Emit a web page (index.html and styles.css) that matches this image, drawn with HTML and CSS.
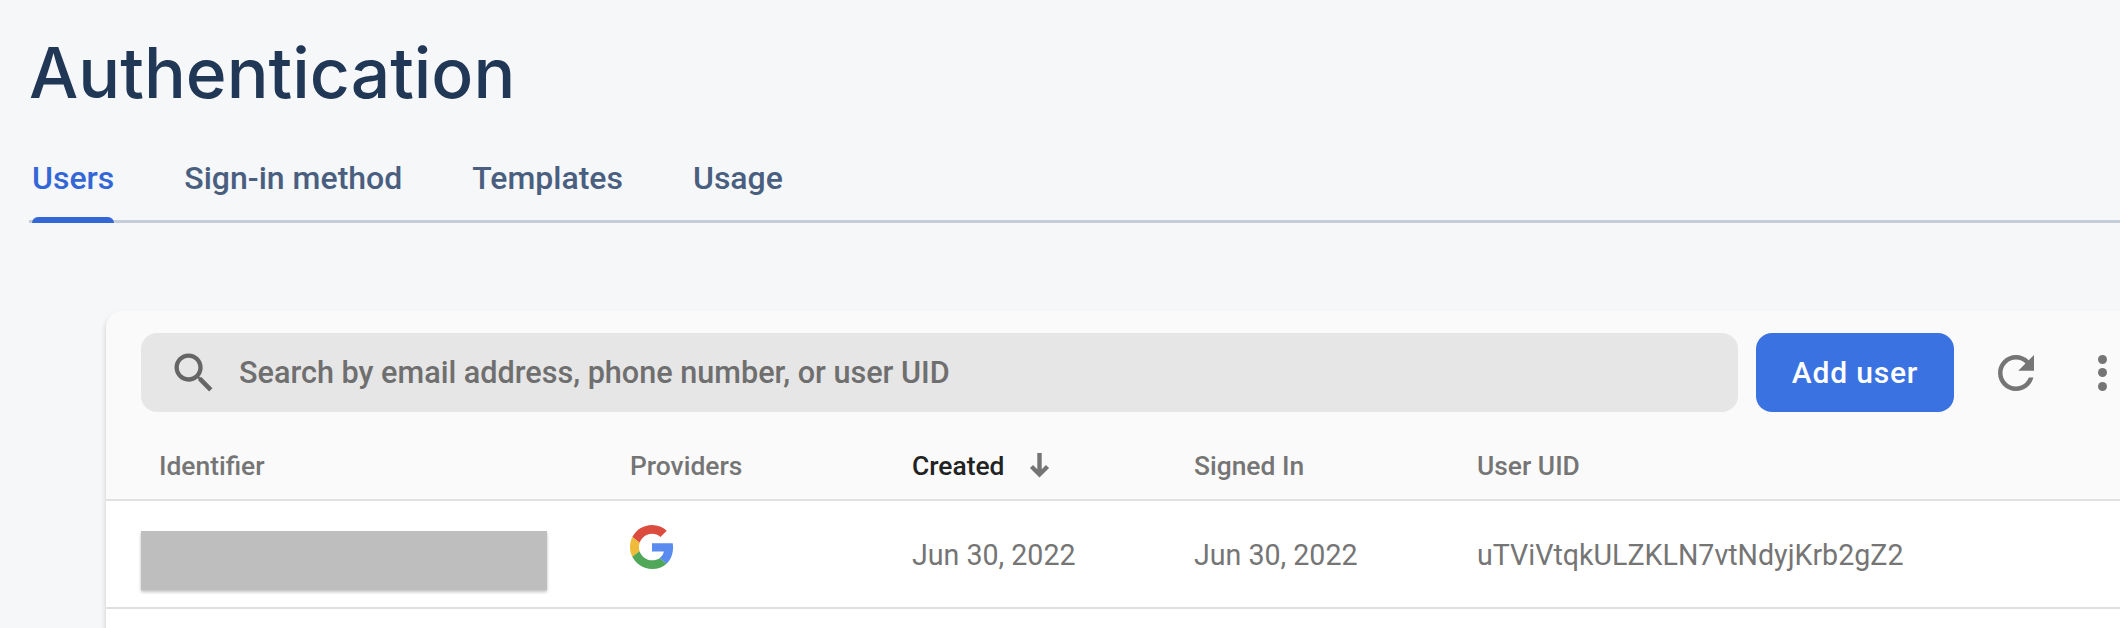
FILE: index.html
```html
<!DOCTYPE html>
<html lang="en">
<head>
    <meta charset="UTF-8">
    <meta name="viewport" content="width=device-width, initial-scale=1.0">
    <title>Authentication</title>
    <link rel="stylesheet" href="styles.css">
</head>
<body>

    <!-- Page header -->
    <header class="page-header">
        <h1>Authentication</h1>
        <nav class="tabs">
            <a href="#" class="tab active">Users</a>
            <a href="#" class="tab">Sign-in method</a>
            <a href="#" class="tab">Templates</a>
            <a href="#" class="tab">Usage</a>
        </nav>
    </header>

    <!-- Users card -->
    <section class="card">
        <div class="toolbar">
            <div class="search">
                <svg class="search-icon" viewBox="0 0 24 24"><path d="M15.5 14h-.79l-.28-.27C15.41 12.59 16 11.11 16 9.5 16 5.91 13.09 3 9.5 3S3 5.91 3 9.5 5.91 16 9.5 16c1.61 0 3.09-.59 4.23-1.57l.27.28v.79l5 4.99L20.49 19l-4.99-5zm-6 0C7.01 14 5 11.99 5 9.5S7.01 5 9.5 5 14 7.01 14 9.5 11.99 14 9.5 14z"/></svg>
                <span>Search by email address, phone number, or user UID</span>
            </div>
            <button class="add-user">Add user</button>
            <svg class="refresh-icon" viewBox="0 0 24 24"><path d="M17.65 6.35C16.2 4.9 14.21 4 12 4c-4.42 0-7.99 3.58-7.99 8s3.57 8 7.99 8c3.73 0 6.84-2.55 7.73-6h-2.08c-.82 2.33-3.04 4-5.65 4-3.31 0-6-2.69-6-6s2.69-6 6-6c1.66 0 3.14.69 4.22 1.78L13 11h7V4l-2.35 2.35z"/></svg>
            <div class="more">
                <i></i><i></i><i></i>
            </div>
        </div>

        <div class="row head">
            <div class="first">Identifier</div>
            <div>Providers</div>
            <div class="sorted">Created
                <svg class="sort-icon" viewBox="0 0 21 25"><path d="M10.5 0V22M2.5 13.5L10.5 21.5L18.5 13.5"/></svg>
            </div>
            <div>Signed In</div>
            <div>User UID</div>
        </div>

        <div class="row body-row">
            <div class="redacted"></div>
            <div class="provider">
                <svg class="google" viewBox="0 0 48 48">
                    <path fill="#DB4C3F" d="M24 9.5c3.54 0 6.71 1.22 9.21 3.6l6.85-6.85C35.9 2.38 30.47 0 24 0 14.62 0 6.51 5.38 2.56 13.22l7.98 6.19C12.43 13.72 17.74 9.5 24 9.5z"/>
                    <path fill="#5A8BEE" d="M46.98 24.55c0-1.57-.15-3.09-.38-4.55H24v9.02h12.94c-.58 2.96-2.26 5.48-4.78 7.18l7.73 6c4.51-4.18 7.09-10.36 7.09-17.65z"/>
                    <path fill="#F0BB3A" d="M10.53 28.59c-.48-1.45-.76-2.99-.76-4.59s.27-3.14.76-4.59l-7.98-6.19C.92 16.46 0 20.12 0 24c0 3.88.92 7.54 2.56 10.78l7.97-6.19z"/>
                    <path fill="#50A75A" d="M24 48c6.48 0 11.93-2.13 15.89-5.81l-7.73-6c-2.15 1.45-4.92 2.3-8.16 2.3-6.26 0-11.57-4.22-13.47-9.91l-7.98 6.19C6.51 42.62 14.62 48 24 48z"/>
                </svg>
            </div>
            <div>Jun 30, 2022</div>
            <div>Jun 30, 2022</div>
            <div>uTViVtqkULZKLN7vtNdyjKrb2gZ2</div>
        </div>

        <div class="empty-row"></div>
    </section>

</body>
</html>
```

FILE: styles.css
```css
body {
    margin: 0;
    height: 628px;
    overflow: hidden;
    background-color: #f6f7f9;
    font-family: 'Roboto', sans-serif;
}

/* Page header */
.page-header {
    padding: 33px 0 0 29px;
}

h1 {
    margin: 0;
    height: 80px;
    line-height: 80px;
    font-family: 'Inter', sans-serif;
    font-size: 69.6px;
    font-weight: 500;
    color: #213756;
}

.tabs {
    display: flex;
    gap: 70px;
    margin-top: 27px;
    padding-left: 3px;
    height: 80px;
    border-bottom: 3px solid #c5ccda;
}

.tab {
    position: relative;
    padding-top: 20px;
    line-height: 36px;
    font-size: 32px;
    font-weight: 500;
    color: #4a5f80;
    text-decoration: none;
}

.tab.active {
    color: #3367d6;
}

.tab.active::after {
    content: '';
    position: absolute;
    left: 0;
    right: 0;
    bottom: -3px;
    height: 6px;
    background-color: #3367d6;
    border-radius: 6px 6px 0 0;
}

/* Users card */
.card {
    margin: 88px 0 0 106px;
    background-color: #fafafa;
    border-radius: 16px 0 0 0;
    box-shadow: -1px 3px 5px rgba(0, 0, 0, 0.13);
}

.toolbar {
    display: flex;
    align-items: center;
    height: 79px;
    padding: 22px 0 0 35px;
}

.search {
    display: flex;
    align-items: center;
    gap: 19px;
    width: 1597px;
    height: 79px;
    padding-left: 27px;
    box-sizing: border-box;
    background-color: #e6e6e6;
    border-radius: 16px;
    font-size: 30.6px;
    font-weight: 500;
    color: #6f6f6f;
}

.search-icon {
    width: 52px;
    height: 52px;
    fill: #666;
}

.add-user {
    width: 198px;
    height: 79px;
    margin-left: 18px;
    padding: 0;
    border: none;
    border-radius: 16px;
    background-color: #3a72e2;
    color: white;
    font-family: inherit;
    font-size: 30px;
    font-weight: 500;
    letter-spacing: 0.8px;
}

.refresh-icon {
    width: 54px;
    height: 54px;
    margin-left: 35px;
    fill: #757575;
}

.more {
    display: flex;
    flex-direction: column;
    gap: 4.5px;
    margin-left: 55px;
}

.more i {
    width: 9px;
    height: 9px;
    border-radius: 50%;
    background-color: #757575;
}

/* Table */
.row {
    display: grid;
    grid-template-columns: 489px 282px 282px 283px 1fr;
    align-items: center;
    padding-left: 35px;
    font-size: 28.6px;
    color: #757575;
}

.row.head {
    padding-top: 20px;
    height: 67px;
    border-bottom: 2px solid #e0e0e0;
    font-size: 26.4px;
    font-weight: 500;
    color: #757575;
}

.first {
    padding-left: 18px;
}

.sorted {
    display: flex;
    align-items: center;
    gap: 25px;
    color: #222;
}

.sort-icon {
    width: 21px;
    height: 25px;
    fill: none;
    stroke: #757575;
    stroke-width: 4.4;
}

.body-row {
    height: 104px;
    padding-top: 2px;
    background-color: white;
    border-bottom: 2px solid #e0e0e0;
}

.redacted {
    width: 406px;
    height: 59px;
    margin-top: 10px;
    background-color: #bebebe;
    box-shadow: 0 2px 3px rgba(0, 0, 0, 0.25);
}

.provider {
    height: 100%;
    padding-top: 22px;
    box-sizing: border-box;
}

.google {
    width: 44px;
    height: 44px;
}

.empty-row {
    height: 40px;
    background-color: white;
}
```
